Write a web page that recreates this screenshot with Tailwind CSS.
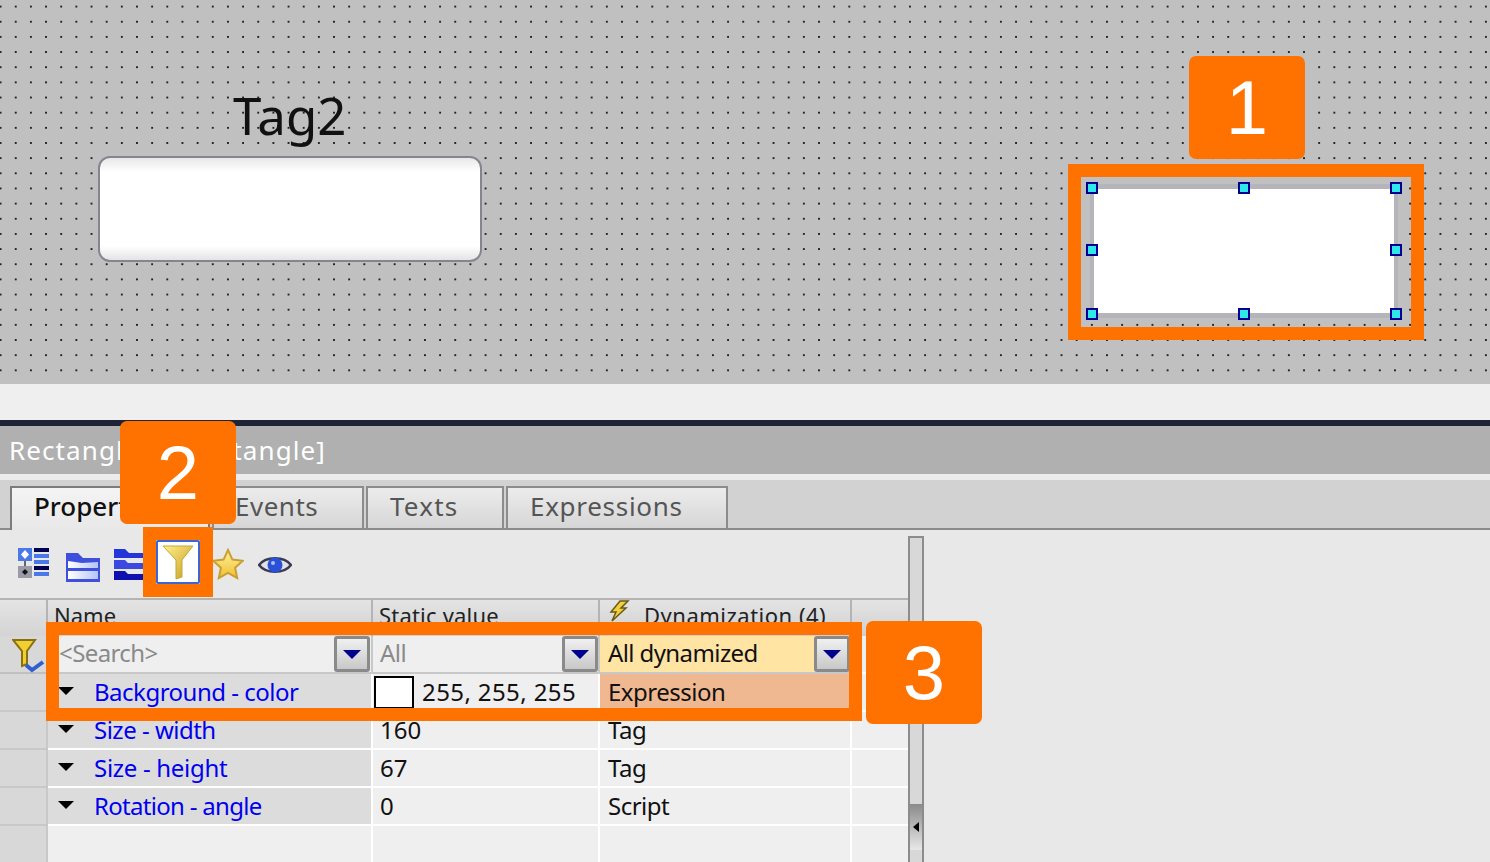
<!DOCTYPE html>
<html>
<head>
<meta charset="utf-8">
<script src="https://cdn.jsdelivr.net/npm/@tailwindcss/browser@4"></script>
</head>
<body class="m-0 overflow-hidden bg-[#e8e8e8]">
<div class="relative w-[1490px] h-[862px] overflow-hidden font-['Noto_Sans',sans-serif] text-[24px] leading-none">

  <!-- Canvas -->
  <div class="relative h-[384px] bg-[#c0c0c0] bg-[radial-gradient(circle,#222_1px,transparent_1.3px)] bg-[length:15.17px_15.17px] bg-[position:-7px_-1px]">
    <div class="absolute left-[233px] top-[85px] text-[51px] leading-[60px] text-[#111]">Tag2</div>
    <div class="absolute left-[98px] top-[156px] w-[384px] h-[106px] rounded-[12px] border-2 border-[#85858f] bg-[linear-gradient(#e8e8e8,#ffffff_14px,#ffffff_88px,#e4e4e4)]"></div>

    <!-- selected rectangle -->
    <div class="absolute left-[1068px] top-[164px] w-[356px] h-[176px] border-[13px] border-[#ff7200]"></div>
    <div class="absolute left-[1090px] top-[184px] w-[308px] h-[134px] rounded-[3px] bg-white border-x-[4px] border-y-[5px] border-[#b4b4ba]"></div>
    <div class="absolute left-[1086px] top-[182px] size-[12px] bg-[#30e8e8] border-[2px] border-[#000090]"></div>
    <div class="absolute left-[1238px] top-[182px] size-[12px] bg-[#30e8e8] border-[2px] border-[#000090]"></div>
    <div class="absolute left-[1390px] top-[182px] size-[12px] bg-[#30e8e8] border-[2px] border-[#000090]"></div>
    <div class="absolute left-[1086px] top-[244px] size-[12px] bg-[#30e8e8] border-[2px] border-[#000090]"></div>
    <div class="absolute left-[1390px] top-[244px] size-[12px] bg-[#30e8e8] border-[2px] border-[#000090]"></div>
    <div class="absolute left-[1086px] top-[308px] size-[12px] bg-[#30e8e8] border-[2px] border-[#000090]"></div>
    <div class="absolute left-[1238px] top-[308px] size-[12px] bg-[#30e8e8] border-[2px] border-[#000090]"></div>
    <div class="absolute left-[1390px] top-[308px] size-[12px] bg-[#30e8e8] border-[2px] border-[#000090]"></div>
  </div>

  <div class="h-[36px] bg-[#efefef]"></div>
  <div class="h-[6px] bg-[#1e2336]"></div>
  <div class="h-[48px] bg-[#b0b0b0] flex items-center pl-[9px] text-white text-[26px] tracking-[1.1px]">Rectangle_1 [Rectangle]</div>
  <div class="h-[6px] bg-[#ececec]"></div>

  <!-- tabs -->
  <div class="h-[50px] bg-[#d2d2d2] border-b-2 border-[#8c8c8c] flex items-end pl-[10px] gap-[2px] text-[26px]">
    <div class="w-[200px] h-[44px] -mb-[2px] bg-[linear-gradient(#f4f4f4,#e8e8e8)] border-2 border-b-0 border-[#7c7c7c] flex items-center pl-[22px] pb-[6px] text-[#111] font-medium">Properties</div>
    <div class="w-[152px] h-[42px] bg-[linear-gradient(#ececec,#d6d6d6)] border-2 border-b-0 border-[#8c8c8c] flex items-center pl-[21px] pb-[4px] text-[#555] tracking-[0.5px]">Events</div>
    <div class="w-[138px] h-[42px] bg-[linear-gradient(#ececec,#d6d6d6)] border-2 border-b-0 border-[#8c8c8c] flex items-center pl-[22px] pb-[4px] text-[#555] tracking-[1.2px]">Texts</div>
    <div class="w-[222px] h-[42px] bg-[linear-gradient(#ececec,#d6d6d6)] border-2 border-b-0 border-[#8c8c8c] flex items-center pl-[22px] pb-[4px] text-[#555] tracking-[0.7px]">Expressions</div>
  </div>

  <!-- panel -->
  <div class="relative h-[332px] w-[924px]">
    <!-- toolbar -->
    <div class="h-[68px]">
      <svg class="absolute left-[16px] top-[16px]" width="36" height="36" viewBox="0 0 36 36">
        <rect x="2" y="2" width="14" height="13" fill="#4a78e8"/><path d="M9 4l4 4.500-4 4.500-4-4.500z" fill="#fff"/>
        <rect x="8" y="15" width="2" height="5" fill="#666"/>
        <rect x="2" y="20" width="14" height="12" fill="#9a9aa8"/><path d="M9 23l3 3-3 3-3-3z" fill="#111"/>
        <rect x="18" y="2" width="15" height="4" fill="#000050"/><rect x="18" y="8" width="15" height="4" fill="#4a78e8"/>
        <rect x="18" y="14" width="15" height="4" fill="#4a78e8"/><rect x="18" y="20" width="15" height="4" fill="#000050"/>
        <rect x="18" y="26" width="15" height="4" fill="#4a78e8"/>
      </svg>
      <svg class="absolute left-[65px] top-[21px]" width="36" height="32" viewBox="0 0 36 32">
        <defs><linearGradient id="fo" x1="0" y1="0" x2="1" y2="0"><stop offset="0" stop-color="#ffffff"/><stop offset="1" stop-color="#b4c4f8"/></linearGradient></defs>
        <path d="M1 2h12l5 5h17v24H1z" fill="#3f50dc"/>
        <path d="M3 10l14 2 16-1v6H3z" fill="url(#fo)"/><path d="M3 20h30v8H3z" fill="url(#fo)"/>
      </svg>
      <svg class="absolute left-[113px] top-[17px]" width="32" height="36" viewBox="0 0 32 36">
        <path d="M1 2h11l4 4h16v5H1z" fill="#2436d8"/><path d="M1 13h11l3 3h17v6H1z" fill="#3a4ae0"/><path d="M1 24h11l3 3h17v6H1z" fill="#1010b0"/>
      </svg>
      <svg class="absolute left-[212px] top-[18px]" width="32" height="32" viewBox="0 0 32 32">
        <defs><linearGradient id="st" x1="0" y1="0" x2="0" y2="1"><stop offset="0" stop-color="#fff0a0"/><stop offset="1" stop-color="#f0c030"/></linearGradient></defs>
        <path d="M16 2l4.400 9.600 10.300 1.200-7.600 7 2.100 10.200L16 24.800 6.800 30l2.100-10.200-7.600-7 10.300-1.200z" fill="url(#st)" stroke="#c8a030" stroke-width="2"/>
      </svg>
      <svg class="absolute left-[258px] top-[24px]" width="34" height="22" viewBox="0 0 34 22">
        <path d="M1 11C8 2 26 2 33 11 26 20 8 20 1 11z" fill="#e0e0ea" stroke="#3a3a50" stroke-width="2.500"/>
        <circle cx="17" cy="11" r="7.500" fill="#2a50d8"/><circle cx="15" cy="9" r="2" fill="#a8c0ff"/>
      </svg>
    </div>

    <!-- table -->
    <div class="relative w-[908px] h-[264px] bg-[#efefef] grid grid-cols-[48px_325px_227px_252px_56px] grid-rows-[38px_38px_38px_38px_38px_38px_36px] text-[#111] text-[24px] tracking-[-0.5px]">
      <div class="bg-[linear-gradient(#e4e4e4,#d4d4d4)] border-t-2 border-r-2 border-[#b4b4b4]"></div>
      <div class="bg-[linear-gradient(#e4e4e4,#d0d0d0)] border-t-2 border-r-2 border-[#b4b4b4] pl-[6px] pt-[4px] text-[22px] tracking-normal text-[#222]">Name</div>
      <div class="bg-[linear-gradient(#e4e4e4,#d0d0d0)] border-t-2 border-r-2 border-[#b4b4b4] pl-[6px] pt-[4px] text-[22px] tracking-[0.2px] text-[#222]">Static value</div>
      <div class="relative bg-[linear-gradient(#e4e4e4,#d0d0d0)] border-t-2 border-r-2 border-[#b4b4b4] pl-[44px] pt-[4px] text-[22px] tracking-[0.5px] text-[#222]">Dynamization (4)
        <svg class="absolute left-[6px] top-[0px]" width="24" height="22" viewBox="0 0 24 22"><path d="M14 1h8l-7 7h5L6 21l4-9H5z" fill="#f0d040" stroke="#6a5a10" stroke-width="1.500"/></svg>
      </div>
      <div class="bg-[linear-gradient(#e4e4e4,#d0d0d0)] border-t-2 border-[#b4b4b4]"></div>

      <!-- filter row -->
      <div class="relative bg-[#d8d8d8] border-r-2 border-b-2 border-[#c0c0c0]">
        <svg class="absolute left-[12px] top-[2px]" width="34" height="36" viewBox="0 0 34 36">
          <path d="M1 2h22l-8 11v13l-5 2V13z" fill="#f0d030" stroke="#8a7010" stroke-width="2"/>
          <path d="M14 27l6 5 11-8" fill="none" stroke="#3060d0" stroke-width="4"/>
        </svg>
      </div>
      <div class="relative bg-[#efefef] border-r-2 border-b-2 border-[#c8c8c8] pl-[11px] pt-[5px] text-[#8a8a8a] tracking-[-0.6px]">&lt;Search&gt;
        <div class="absolute right-[1px] top-0 w-[36px] h-[36px] rounded-[3px] border-[3px] border-[#8a8a8a] bg-[linear-gradient(#f0f0f0,#c8c8c8)] flex items-center justify-center"><svg width="18" height="9" viewBox="0 0 18 9"><path d="M0 0h18l-9 9z" fill="#000090"/></svg></div>
      </div>
      <div class="relative bg-[#efefef] border-r-2 border-b-2 border-[#c8c8c8] pl-[7px] pt-[5px] text-[#8a8a8a]">All
        <div class="absolute right-0 top-0 w-[36px] h-[36px] rounded-[3px] border-[3px] border-[#8a8a8a] bg-[linear-gradient(#f0f0f0,#c8c8c8)] flex items-center justify-center"><svg width="18" height="9" viewBox="0 0 18 9"><path d="M0 0h18l-9 9z" fill="#000090"/></svg></div>
      </div>
      <div class="relative bg-[#ffe4a4] border-r-2 border-b-2 border-[#c8c8c8] pl-[8px] pt-[5px] tracking-[-0.6px]">All dynamized
        <div class="absolute right-0 top-0 w-[36px] h-[36px] rounded-[3px] border-[3px] border-[#8a8a8a] bg-[linear-gradient(#f0f0f0,#c8c8c8)] flex items-center justify-center"><svg width="18" height="9" viewBox="0 0 18 9"><path d="M0 0h18l-9 9z" fill="#000090"/></svg></div>
      </div>
      <div class="bg-[#efefef] border-b-2 border-white"></div>

      <!-- rows -->
      <div class="bg-[#d8d8d8] border-r-2 border-b-2 border-[#c8c8c8]"></div>
      <div class="relative bg-[#dcdcdc] border-r-2 border-b-2 border-white pl-[46px] pt-[6px] text-[#0000f0]"><svg class="absolute left-[10px] top-[13px]" width="16" height="8" viewBox="0 0 16 8"><path d="M0 0h16l-8 8z" fill="#000"/></svg>Background - color</div>
      <div class="relative bg-[#efefef] border-r-2 border-b-2 border-white pl-[49px] pt-[6px] tracking-[0.4px]"><div class="absolute left-[1px] top-[2px] w-[40px] h-[33px] bg-white border-2 border-black"></div>255, 255, 255</div>
      <div class="bg-[#f0b890] border-r-2 border-b-2 border-white pl-[8px] pt-[6px]">Expression</div>
      <div class="border-b-2 border-white"></div>

      <div class="bg-[#d8d8d8] border-r-2 border-b-2 border-[#c8c8c8]"></div>
      <div class="relative bg-[#dcdcdc] border-r-2 border-b-2 border-white pl-[46px] pt-[6px] text-[#0000f0]"><svg class="absolute left-[10px] top-[13px]" width="16" height="8" viewBox="0 0 16 8"><path d="M0 0h16l-8 8z" fill="#000"/></svg>Size - width</div>
      <div class="border-r-2 border-b-2 border-white pl-[7px] pt-[6px] tracking-normal">160</div>
      <div class="border-r-2 border-b-2 border-white pl-[8px] pt-[6px]">Tag</div>
      <div class="border-b-2 border-white"></div>

      <div class="bg-[#d8d8d8] border-r-2 border-b-2 border-[#c8c8c8]"></div>
      <div class="relative bg-[#dcdcdc] border-r-2 border-b-2 border-white pl-[46px] pt-[6px] text-[#0000f0] tracking-[-0.3px]"><svg class="absolute left-[10px] top-[13px]" width="16" height="8" viewBox="0 0 16 8"><path d="M0 0h16l-8 8z" fill="#000"/></svg>Size - height</div>
      <div class="border-r-2 border-b-2 border-white pl-[7px] pt-[6px] tracking-normal">67</div>
      <div class="border-r-2 border-b-2 border-white pl-[8px] pt-[6px]">Tag</div>
      <div class="border-b-2 border-white"></div>

      <div class="bg-[#d8d8d8] border-r-2 border-b-2 border-[#c8c8c8]"></div>
      <div class="relative bg-[#dcdcdc] border-r-2 border-b-2 border-white pl-[46px] pt-[6px] text-[#0000f0] tracking-[-0.7px]"><svg class="absolute left-[10px] top-[13px]" width="16" height="8" viewBox="0 0 16 8"><path d="M0 0h16l-8 8z" fill="#000"/></svg>Rotation - angle</div>
      <div class="border-r-2 border-b-2 border-white pl-[7px] pt-[6px] tracking-normal">0</div>
      <div class="border-r-2 border-b-2 border-white pl-[8px] pt-[6px]">Script</div>
      <div class="border-b-2 border-white"></div>

      <div class="bg-[#d8d8d8] border-r-2 border-[#c8c8c8]"></div>
      <div class="border-r-2 border-white"></div>
      <div class="border-r-2 border-white"></div>
      <div class="border-r-2 border-white"></div>
      <div></div>
    </div>

    <!-- scrollbar -->
    <div class="absolute left-[908px] top-[6px] bottom-0 w-[16px] bg-[#d8d8d8] border-x-2 border-t-2 border-[#8c8c8c]">
      <div class="absolute left-0 right-0 top-[266px] h-[46px] bg-[linear-gradient(#8a8a8a,#e8e8e8)] flex items-center justify-center"><svg width="6" height="10" viewBox="0 0 6 10"><path d="M6 0v10L0 5z" fill="#000"/></svg></div>
    </div>
  </div>

  <!-- orange highlights over the panel -->
  <div class="absolute left-[46px] top-[622px] w-[816px] h-[99px] border-[13px] border-[#ff7200]"></div>
  <div class="absolute left-[143px] top-[527px] w-[70px] h-[70px] border-[13px] border-[#ff7200]">
    <div class="w-full h-full bg-white rounded-[2px] border-2 border-[#3a66d8] flex items-center justify-center">
      <svg width="32" height="36" viewBox="0 0 32 36">
        <defs><linearGradient id="fu" x1="0" y1="0" x2="1" y2="1"><stop offset="0" stop-color="#fff08a"/><stop offset="1" stop-color="#c89a20"/></linearGradient></defs>
        <path d="M1 2h30L20 16v17l-6 2V16z" fill="url(#fu)" stroke="#c4a838" stroke-width="1"/>
      </svg>
    </div>
  </div>

  <!-- number callouts -->
  <div class="absolute left-[1189px] top-[56px] w-[116px] h-[103px] rounded-[7px] bg-[#ff7200] flex items-center justify-center text-white text-[76px] font-['Liberation_Sans',sans-serif]">1</div>
  <div class="absolute left-[120px] top-[421px] w-[116px] h-[103px] rounded-[7px] bg-[#ff7200] flex items-center justify-center text-white text-[76px] font-['Liberation_Sans',sans-serif]">2</div>
  <div class="absolute left-[866px] top-[621px] w-[116px] h-[103px] rounded-[7px] bg-[#ff7200] flex items-center justify-center text-white text-[76px] font-['Liberation_Sans',sans-serif]">3</div>
</div>
</body>
</html>
